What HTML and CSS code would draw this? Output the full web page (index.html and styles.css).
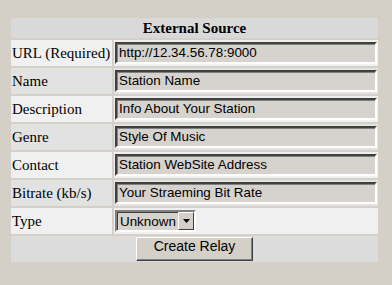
FILE: index.html
```html
<!DOCTYPE html>
<html lang="en">
<head>
  <meta charset="UTF-8">
  <title>External Source</title>
  <link rel="stylesheet" href="styles.css">
</head>
<body>
  <table class="relay">
    <tr><th colspan="2" class="head">External Source</th></tr>
    <tr class="light"><td class="label">URL (Required)</td><td class="field"><div class="input">http://12.34.56.78:9000</div></td></tr>
    <tr class="dark"><td class="label">Name</td><td class="field"><div class="input">Station Name</div></td></tr>
    <tr class="light"><td class="label">Description</td><td class="field"><div class="input">Info About Your Station</div></td></tr>
    <tr class="dark"><td class="label">Genre</td><td class="field"><div class="input">Style Of Music</div></td></tr>
    <tr class="light"><td class="label">Contact</td><td class="field"><div class="input">Station WebSite Address</div></td></tr>
    <tr class="dark"><td class="label">Bitrate (kb/s)</td><td class="field"><div class="input">Your Straeming Bit Rate</div></td></tr>
    <tr class="light">
      <td class="label">Type</td>
      <td class="field">
        <div class="select">
          <span class="select-text">Unknown</span>
          <span class="select-btn"><svg width="7" height="4" viewBox="0 0 7 4"><path d="M0 0h7L3.5 4z" fill="#000"/></svg></span>
        </div>
      </td>
    </tr>
    <tr><td colspan="2" class="foot"><div class="button">Create Relay</div></td></tr>
  </table>
</body>
</html>
```

FILE: styles.css
```css
body { margin: 0; background: #d4d0c8; font-family: "Liberation Serif", serif; }
.relay { margin: 16px 0 0 9px; width: 371px; border-spacing: 2px; font-size: 15px; }
.relay td, .relay th { padding: 0; }
.head { background: #d9d9da; height: 20px; font-weight: bold; text-align: center; }
.light td { background: #f0f0f0; }
.dark td { background: #e2e2e2; }
.label { width: 100px; height: 26px; padding-left: 1px !important; white-space: nowrap; }
.field { padding: 1px !important; }
.input { height: 18px; border-style: solid; border-width: 2px; border-color: #404040 #fff #fff #404040; box-shadow: inset 1px 1px 0 #808080; background: #d6d3ce; font: 13.4px "Liberation Sans", sans-serif; line-height: 18px; padding-left: 2px; }
.select { display: inline-flex; align-items: center; height: 18px; border-style: solid; border-width: 2px; border-color: #808080 #fff #fff #808080; box-shadow: inset 1px 1px 0 #404040; background: #d6d3ce; font: 13.4px "Liberation Sans", sans-serif; padding-left: 3px; }
.select-text { width: 58px; }
.select-btn { display: flex; align-items: center; justify-content: center; width: 14px; height: 16px; border-style: solid; border-width: 1px; border-color: #fff #404040 #404040 #fff; background: #d4d0c8; }
.foot { background: #dcdcdc; height: 26px; text-align: center; }
.button { display: inline-block; width: 115px; height: 22px; line-height: 22px; border-style: solid; border-width: 1px; border-color: #fff #404040 #404040 #fff; box-shadow: inset -1px -1px 0 #808080; background: #d4d0c8; font: 14px "Liberation Sans", sans-serif; vertical-align: middle; }
```
